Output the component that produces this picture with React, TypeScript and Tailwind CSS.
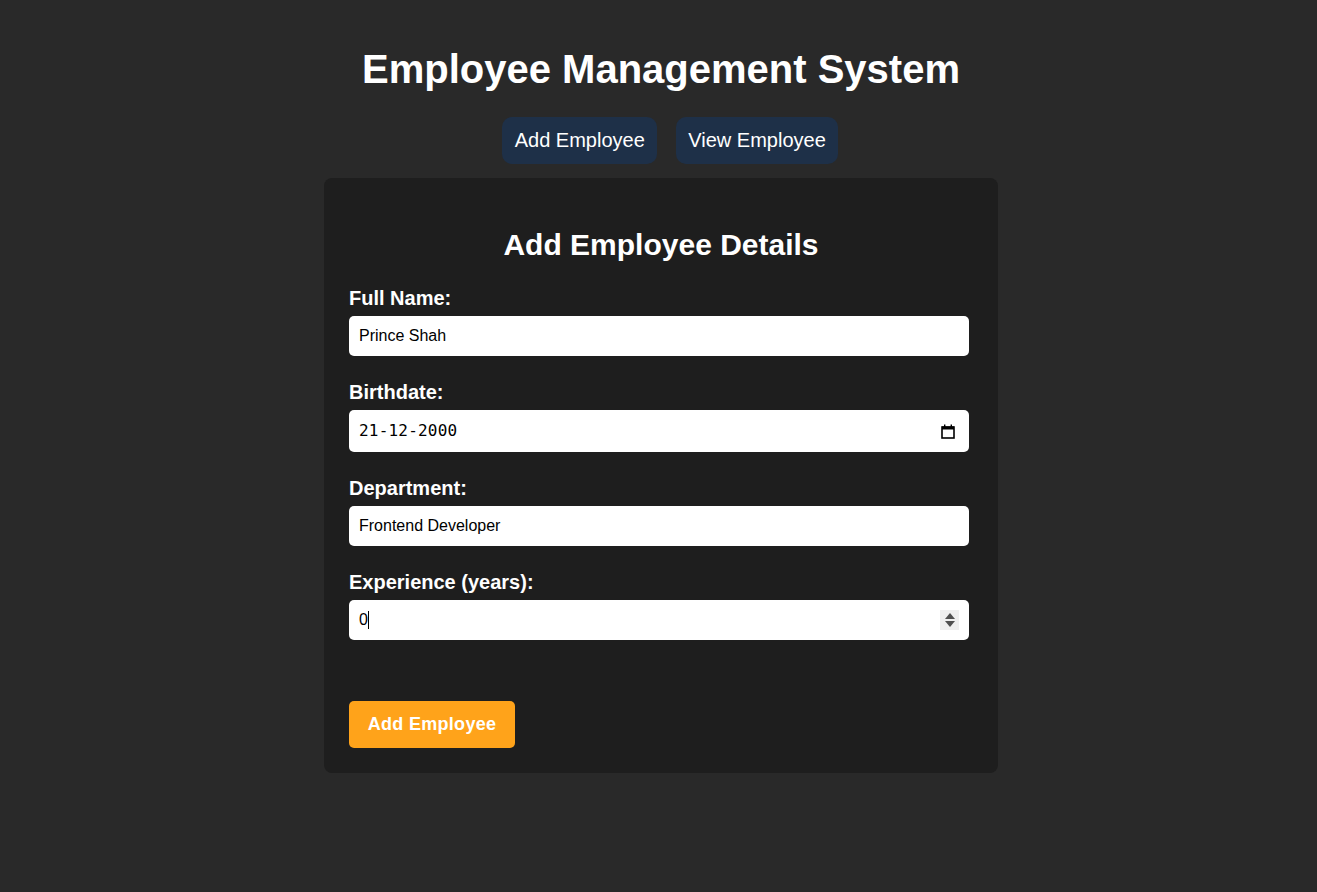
import React from "react";

const font = { fontFamily: '"Liberation Sans", Arial, sans-serif' };

function Field({ label, children, last }: { label: string; children: React.ReactNode; last?: boolean }) {
  return (
    <div className={last ? "" : "mb-[25px]"}>
      <div className="text-[20px] font-bold leading-[23px] text-white mb-[6px]">{label}</div>
      {children}
    </div>
  );
}

export default function App() {
  return (
    <div className="min-h-screen w-full bg-[#292929] flex flex-col items-center pl-[5px]" style={font}>
      <h1 className="mt-[46px] text-[40px] leading-[46px] font-bold text-white">Employee Management System</h1>
      <div className="mt-[25px] ml-[18px] flex gap-[19px]">
        <button className="h-[47px] px-[12.5px] rounded-[10px] bg-[#1e3048] text-white text-[20px] leading-[23px]">Add Employee</button>
        <button className="h-[47px] px-[12px] rounded-[10px] bg-[#1e3048] text-white text-[20px] leading-[23px]">View Employee</button>
      </div>
      <div className="mt-[14px] w-[674px] rounded-[8px] bg-[#1e1e1e] p-[25px]">
        <h2 className="mt-[25px] mb-[25px] text-center text-[30px] leading-[34px] font-bold text-white">Add Employee Details</h2>
        <Field label="Full Name:">
          <div className="w-[620px] h-[40px] rounded-[5px] bg-white flex items-center px-[10px] text-[16px] text-black">Prince Shah</div>
        </Field>
        <Field label="Birthdate:">
          <div className="w-[620px] h-[42px] rounded-[5px] bg-white flex items-center pl-[10px] pr-[14px] text-black">
            <span className="text-[16px] tracking-[0.2px]" style={{ fontFamily: '"DejaVu Sans Mono", monospace' }}>21-12-2000</span>
            <div className="flex-1" />
            <svg width="14" height="15" viewBox="0 0 14 15">
              <rect x="1" y="3" width="12" height="11" fill="none" stroke="#000" strokeWidth="1.6" />
              <rect x="1" y="2.5" width="12" height="3" fill="#000" />
              <rect x="3" y="0.5" width="1.4" height="3" fill="#000" />
              <rect x="9.6" y="0.5" width="1.4" height="3" fill="#000" />
            </svg>
          </div>
        </Field>
        <Field label="Department:">
          <div className="w-[620px] h-[40px] rounded-[5px] bg-white flex items-center px-[10px] text-[16px] text-black">Frontend Developer</div>
        </Field>
        <Field label="Experience (years):" last>
          <div className="w-[620px] h-[40px] rounded-[5px] bg-white flex items-center pl-[10px] pr-[10px] text-[16px] text-black">
            <span>0</span>
            <span className="inline-block w-[1px] h-[18px] bg-black" />
            <div className="flex-1" />
            <div className="w-[19px] h-[20px] bg-[#efefef] flex flex-col items-center justify-center gap-[2px]">
              <svg width="10" height="6" viewBox="0 0 10 6"><path d="M5 0 L10 6 L0 6 Z" fill="#505050" /></svg>
              <svg width="10" height="6" viewBox="0 0 10 6"><path d="M0 0 L10 0 L5 6 Z" fill="#505050" /></svg>
            </div>
          </div>
        </Field>
        <button className="mt-[61px] h-[47px] w-[166px] rounded-[5px] bg-[#ffa31a] text-white text-[18px] font-bold tracking-[0.3px]">Add Employee</button>
      </div>
    </div>
  );
}
